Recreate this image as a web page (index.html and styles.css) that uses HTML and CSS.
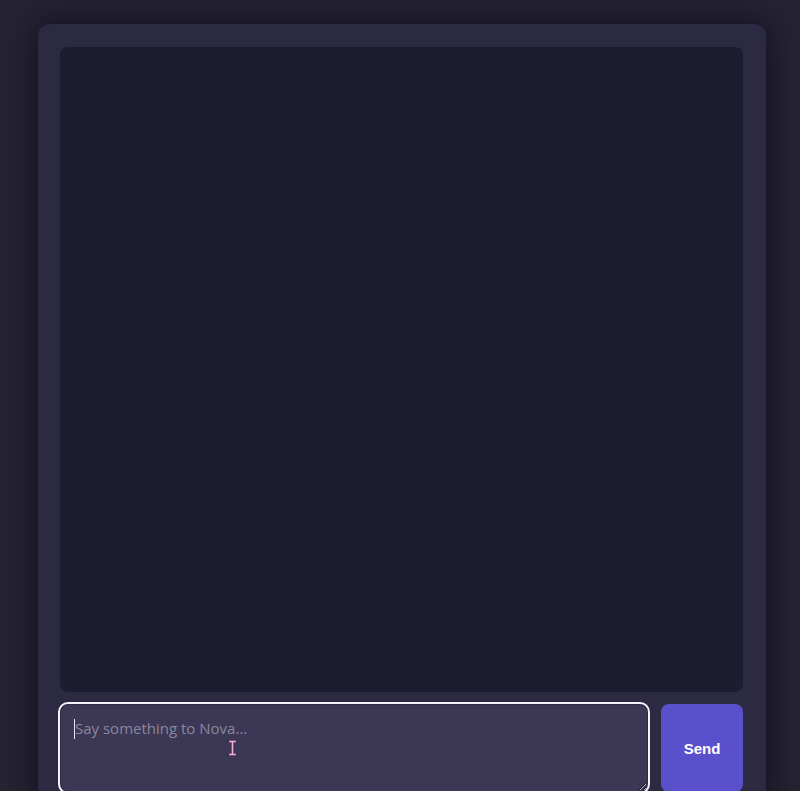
FILE: index.html
```html
<!DOCTYPE html>
<html lang="en">
<head>
<meta charset="utf-8">
<title>Nova</title>
<link rel="stylesheet" href="styles.css">
</head>
<body>
<main class="chat">
  <section class="messages"></section>
  <form class="composer">
    <div class="field">
      <textarea class="input" placeholder="Say something to Nova..."></textarea>
      <span class="caret"></span>
      <svg class="ibeam" width="9" height="16" viewBox="0 0 9 16"><path d="M1 1.5h7M1 14.5h7M4.5 1.5v13" stroke="#d46fa8" stroke-width="2" fill="none"/><path d="M1.8 1.5h5.4M1.8 14.5h5.4M4.5 2v12" stroke="#f2c6dc" stroke-width="0.8" fill="none"/></svg>
    </div>
    <button class="send" type="button">Send</button>
  </form>
</main>
</body>
</html>
```
FILE: styles.css
```css
html, body {
  margin: 0;
  padding: 0;
  height: 100%;
  overflow: hidden;
}
body {
  background: #262433;
  font-family: "Open Sans", "Noto Sans", sans-serif;
}
.chat {
  box-sizing: border-box;
  width: 728px;
  margin: 24px 0 0 38px;
  padding: 23px 23px 22px 22px;
  background: #2c2a42;
  border-radius: 12px;
  box-shadow: 0 0 30px 6px rgba(10, 8, 20, 0.55);
}
.messages {
  height: 645px;
  background: #1e1c30;
  border-radius: 8px;
}
.composer {
  display: flex;
  gap: 13px;
  margin-top: 12px;
}
.field {
  position: relative;
  flex: 1;
  display: flex;
}
.input {
  flex: 1;
  box-sizing: border-box;
  height: 88px;
  padding: 13px 14px;
  background: #3b3754;
  border: 1px solid #2e2b45;
  border-radius: 8px;
  outline: 2px solid #f4f2fa;
  outline-offset: 0;
  color: #e8e6f2;
  font-family: "Open Sans", "Noto Sans", sans-serif;
  font-size: 15px;
  resize: vertical;
}
.input::placeholder {
  color: #8b879f;
}
.caret {
  position: absolute;
  left: 14px;
  top: 15px;
  width: 1px;
  height: 20px;
  background: #e8e6f2;
}
.ibeam {
  position: absolute;
  left: 168px;
  top: 36px;
}
.send {
  width: 82px;
  height: 88px;
  border: none;
  border-radius: 8px;
  background: #5b50cc;
  color: #ffffff;
  font-family: "Liberation Sans", Arial, sans-serif;
  font-weight: bold;
  font-size: 15px;
}
```
